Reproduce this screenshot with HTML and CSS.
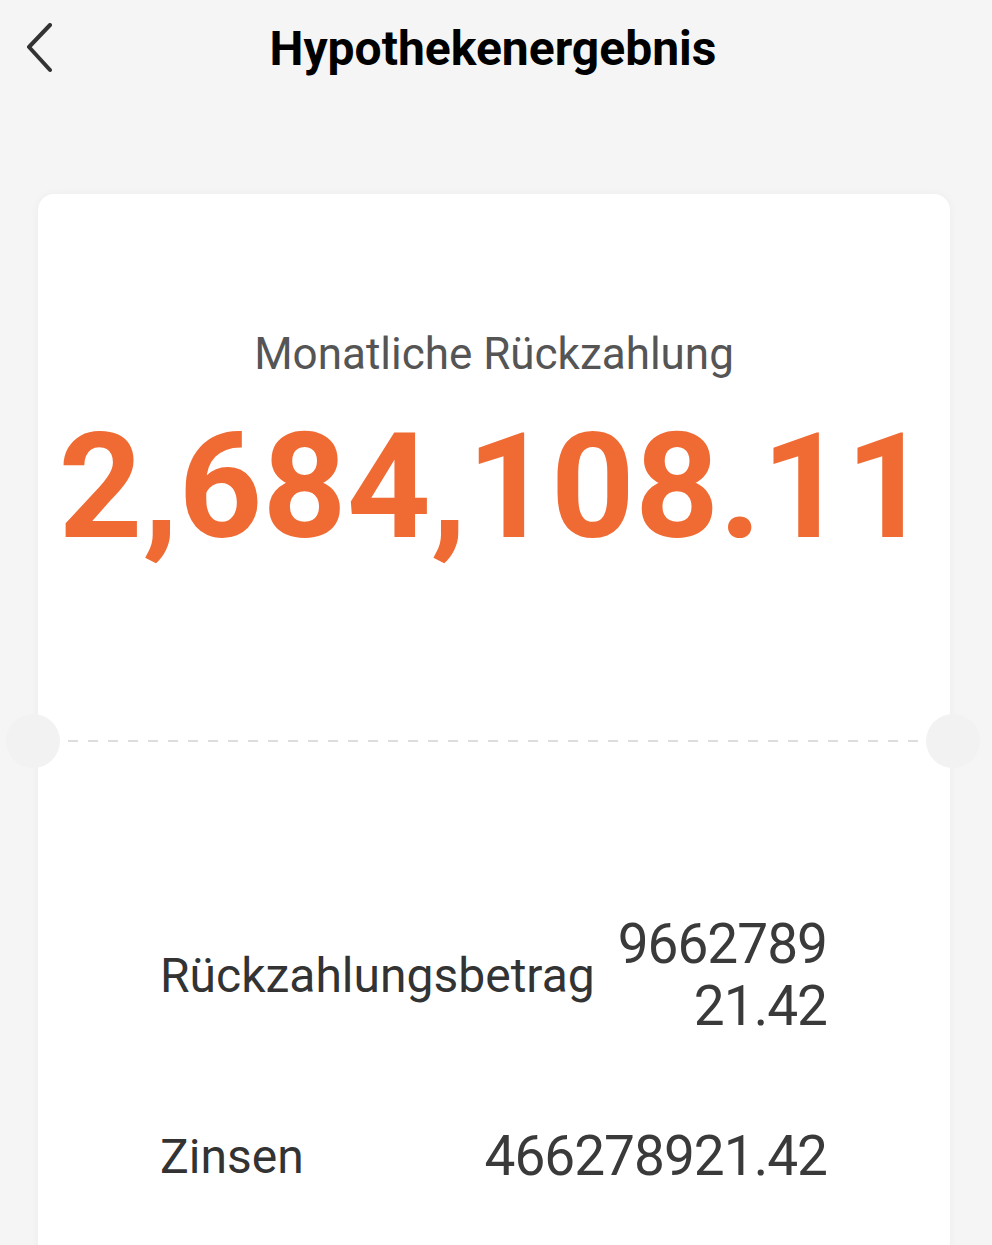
FILE: index.html
```html
<!DOCTYPE html>
<html lang="de">
<head>
<meta charset="utf-8">
<title>Hypothekenergebnis</title>
<link rel="stylesheet" href="styles.css">
</head>
<body>
<div class="page">
  <header class="topbar">
    <button class="back" aria-label="Zurück">
      <svg width="40" height="60" viewBox="0 0 40 60"><path d="M25 2 L4 24 L25 47" fill="none" stroke="#333" stroke-width="4" stroke-linecap="round" stroke-linejoin="round"/></svg>
    </button>
    <h1 class="title">Hypothekenergebnis</h1>
  </header>
  <main class="card">
    <section class="summary">
      <div class="summary-label">Monatliche Rückzahlung</div>
      <div class="summary-value">2,684,108.11</div>
    </section>
    <div class="divider">
      <span class="notch notch-left"></span>
      <span class="dash"></span>
      <span class="notch notch-right"></span>
    </div>
    <section class="details">
      <div class="row">
        <span class="row-label">Rückzahlungsbetrag</span>
        <span class="row-value">966278921.42</span>
      </div>
      <div class="row">
        <span class="row-label">Zinsen</span>
        <span class="row-value">466278921.42</span>
      </div>
    </section>
  </main>
</div>
</body>
</html>
```
FILE: styles.css
```css
html, body {
  margin: 0;
  padding: 0;
  background: #f5f5f5;
  font-family: Roboto, "Noto Sans", sans-serif;
}
.page {
  width: 992px;
  height: 1245px;
  overflow: hidden;
}
.topbar {
  height: 96px;
  display: flex;
  align-items: center;
  justify-content: center;
  position: relative;
}
.back {
  position: absolute;
  left: 25px;
  top: 23px;
  border: 0;
  background: none;
  padding: 0;
  width: 40px;
  height: 60px;
}
.title {
  margin: 0 0 0 -6px;
  font-size: 48px;
  font-weight: 700;
  color: #000;
}
.card {
  margin: 98px 42px 0 38px;
  background: #fff;
  border-radius: 16px 16px 0 0;
  box-shadow: 0 0 10px rgba(0,0,0,0.04);
  min-height: 1100px;
}
.summary {
  height: 547px;
  display: flex;
  flex-direction: column;
  align-items: center;
  box-sizing: border-box;
  padding-top: 134px;
}
.summary-label {
  font-size: 44px;
  line-height: 52px;
  color: #555;
}
.summary-value {
  margin-top: 27px;
  font-size: 146.5px;
  line-height: 160px;
  font-weight: 700;
  color: #f06b34;
}
.divider {
  position: relative;
  height: 0;
  display: flex;
  align-items: center;
}
.dash {
  flex: 1;
  margin: 0 30px;
  height: 2px;
  background: repeating-linear-gradient(90deg, #dddddd 0 10px, transparent 10px 20px);
}
.notch {
  position: absolute;
  top: -27px;
  width: 54px;
  height: 54px;
  border-radius: 50%;
  background: #f2f2f2;
}
.notch-left { left: -32px; }
.notch-right { right: -30px; }
.details {
  padding: 172px 123px 0 122px;
  display: flex;
  flex-direction: column;
  gap: 88px;
}
.row {
  display: flex;
  align-items: center;
  justify-content: space-between;
  gap: 16px;
}
.row-label {
  flex-shrink: 0;
  font-size: 48px;
  color: #333;
  white-space: nowrap;
}
.row-value {
  font-size: 55px;
  line-height: 62px;
  letter-spacing: -1px;
  color: #3a3a3a;
  text-align: right;
  word-break: break-all;
}
```
